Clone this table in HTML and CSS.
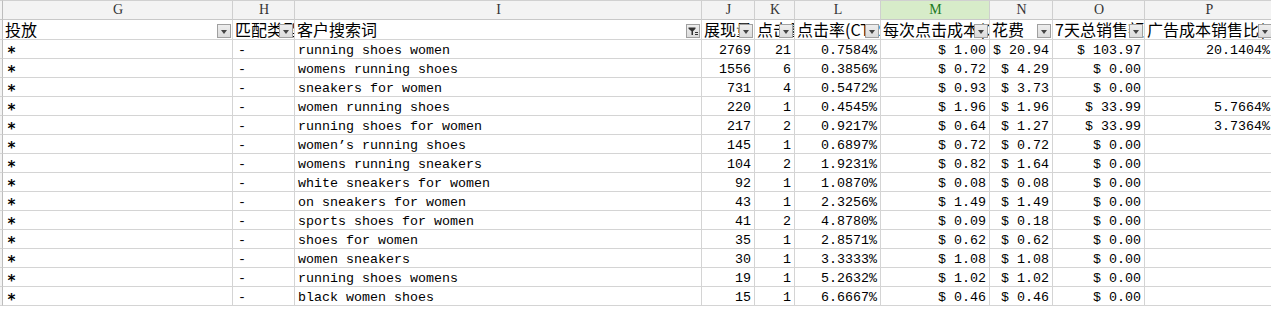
FILE: index.html
```html
<!DOCTYPE html>
<html>
<head>
<meta charset="utf-8">
<link rel="stylesheet" href="styles.css">
</head>
<body>
<div class="sheet">
  <div class="row colhead">
    <div class="c stub"></div>
    <div class="c">G</div><div class="c">H</div><div class="c">I</div><div class="c">J</div><div class="c">K</div><div class="c">L</div><div class="c sel">M</div><div class="c">N</div><div class="c">O</div><div class="c">P</div>
  </div>
  <div class="row fhead">
    <div class="c stub"></div>
    <div class="c"><span class="t">投放</span><span class="dd"></span></div>
    <div class="c"><span class="t">匹配类型</span><span class="dd"></span></div>
    <div class="c"><span class="t">客户搜索词</span><span class="dd act"><svg width="12" height="12" viewBox="0 0 12 12"><path d="M1.5 2.5h7v1.2L6 6.2V10H4.5V6.2L1.5 3.7z" fill="#333"/><path d="M8 7.5h3M8 9.5h3" stroke="#333" stroke-width="1"/></svg></span></div>
    <div class="c"><span class="t">展现量</span><span class="dd"></span></div>
    <div class="c"><span class="t">点击量</span><span class="dd"></span></div>
    <div class="c"><span class="t">点击率(CTR)</span><span class="dd"></span></div>
    <div class="c"><span class="t">每次点击成本(CPC)</span><span class="dd"></span></div>
    <div class="c"><span class="t">花费</span><span class="dd"></span></div>
    <div class="c"><span class="t">7天总销售额</span><span class="dd"></span></div>
    <div class="c"><span class="t">广告成本销售比(ACoS)</span><span class="dd"></span></div>
  </div>
  <div class="row"><div class="c stub"></div><div class="c s">*</div><div class="c d">-</div><div class="c">running shoes women</div><div class="c r">2769</div><div class="c r">21</div><div class="c r">0.7584%</div><div class="c r">$ 1.00</div><div class="c r">$ 20.94</div><div class="c r">$ 103.97</div><div class="c r">20.1404%</div></div>
  <div class="row"><div class="c stub"></div><div class="c s">*</div><div class="c d">-</div><div class="c">womens running shoes</div><div class="c r">1556</div><div class="c r">6</div><div class="c r">0.3856%</div><div class="c r">$ 0.72</div><div class="c r">$ 4.29</div><div class="c r">$ 0.00</div><div class="c r"></div></div>
  <div class="row"><div class="c stub"></div><div class="c s">*</div><div class="c d">-</div><div class="c">sneakers for women</div><div class="c r">731</div><div class="c r">4</div><div class="c r">0.5472%</div><div class="c r">$ 0.93</div><div class="c r">$ 3.73</div><div class="c r">$ 0.00</div><div class="c r"></div></div>
  <div class="row"><div class="c stub"></div><div class="c s">*</div><div class="c d">-</div><div class="c">women running shoes</div><div class="c r">220</div><div class="c r">1</div><div class="c r">0.4545%</div><div class="c r">$ 1.96</div><div class="c r">$ 1.96</div><div class="c r">$ 33.99</div><div class="c r">5.7664%</div></div>
  <div class="row"><div class="c stub"></div><div class="c s">*</div><div class="c d">-</div><div class="c">running shoes for women</div><div class="c r">217</div><div class="c r">2</div><div class="c r">0.9217%</div><div class="c r">$ 0.64</div><div class="c r">$ 1.27</div><div class="c r">$ 33.99</div><div class="c r">3.7364%</div></div>
  <div class="row"><div class="c stub"></div><div class="c s">*</div><div class="c d">-</div><div class="c">women’s running shoes</div><div class="c r">145</div><div class="c r">1</div><div class="c r">0.6897%</div><div class="c r">$ 0.72</div><div class="c r">$ 0.72</div><div class="c r">$ 0.00</div><div class="c r"></div></div>
  <div class="row"><div class="c stub"></div><div class="c s">*</div><div class="c d">-</div><div class="c">womens running sneakers</div><div class="c r">104</div><div class="c r">2</div><div class="c r">1.9231%</div><div class="c r">$ 0.82</div><div class="c r">$ 1.64</div><div class="c r">$ 0.00</div><div class="c r"></div></div>
  <div class="row"><div class="c stub"></div><div class="c s">*</div><div class="c d">-</div><div class="c">white sneakers for women</div><div class="c r">92</div><div class="c r">1</div><div class="c r">1.0870%</div><div class="c r">$ 0.08</div><div class="c r">$ 0.08</div><div class="c r">$ 0.00</div><div class="c r"></div></div>
  <div class="row"><div class="c stub"></div><div class="c s">*</div><div class="c d">-</div><div class="c">on sneakers for women</div><div class="c r">43</div><div class="c r">1</div><div class="c r">2.3256%</div><div class="c r">$ 1.49</div><div class="c r">$ 1.49</div><div class="c r">$ 0.00</div><div class="c r"></div></div>
  <div class="row"><div class="c stub"></div><div class="c s">*</div><div class="c d">-</div><div class="c">sports shoes for women</div><div class="c r">41</div><div class="c r">2</div><div class="c r">4.8780%</div><div class="c r">$ 0.09</div><div class="c r">$ 0.18</div><div class="c r">$ 0.00</div><div class="c r"></div></div>
  <div class="row"><div class="c stub"></div><div class="c s">*</div><div class="c d">-</div><div class="c">shoes for women</div><div class="c r">35</div><div class="c r">1</div><div class="c r">2.8571%</div><div class="c r">$ 0.62</div><div class="c r">$ 0.62</div><div class="c r">$ 0.00</div><div class="c r"></div></div>
  <div class="row"><div class="c stub"></div><div class="c s">*</div><div class="c d">-</div><div class="c">women sneakers</div><div class="c r">30</div><div class="c r">1</div><div class="c r">3.3333%</div><div class="c r">$ 1.08</div><div class="c r">$ 1.08</div><div class="c r">$ 0.00</div><div class="c r"></div></div>
  <div class="row"><div class="c stub"></div><div class="c s">*</div><div class="c d">-</div><div class="c">running shoes womens</div><div class="c r">19</div><div class="c r">1</div><div class="c r">5.2632%</div><div class="c r">$ 1.02</div><div class="c r">$ 1.02</div><div class="c r">$ 0.00</div><div class="c r"></div></div>
  <div class="row"><div class="c stub"></div><div class="c s">*</div><div class="c d">-</div><div class="c">black women shoes</div><div class="c r">15</div><div class="c r">1</div><div class="c r">6.6667%</div><div class="c r">$ 0.46</div><div class="c r">$ 0.46</div><div class="c r">$ 0.00</div><div class="c r"></div></div>
</div>
</body>
</html>
```
FILE: styles.css
```css
html, body {
  margin: 0;
  padding: 0;
  background: #fff;
}
.sheet {
  width: 1271px;
  overflow: hidden;
  font-family: "Liberation Mono", "Noto Sans CJK SC", monospace;
  font-size: 13.33px;
  color: #000;
}
.row {
  display: grid;
  grid-template-columns: 3px 230px 62px 407px 53px 40px 86px 109px 63px 92px 129px;
  height: 19px;
}
.c {
  box-sizing: border-box;
  border-right: 1px solid #d4d4d4;
  border-bottom: 1px solid #d4d4d4;
  padding: 3px 2px 0 3px;
  line-height: 15px;
  white-space: nowrap;
  overflow: hidden;
  position: relative;
}
.c.r {
  text-align: right;
  padding-right: 3px;
}
.c.s {
  font-family: "DejaVu Sans Mono", monospace;
  font-size: 15px;
  font-weight: bold;
  line-height: 15px;
  padding-top: 6px;
  padding-left: 4px;
}
.c.d {
  padding-left: 5px;
}
.stub {
  padding: 0;
  background: #f3f3f3;
  border-right: 1px solid #bdbdbd;
}
.colhead {
  height: 20px;
}
.colhead .c {
  background: #f3f3f3;
  text-align: center;
  color: #333;
  font-family: "Liberation Serif", "DejaVu Serif", serif;
  font-size: 14px;
  padding-top: 0;
  line-height: 18px;
  border-top: 1px solid #d0d0d0;
  border-right-color: #cfcfcf;
  border-bottom-color: #c8c8c8;
}
.colhead .c.sel {
  background: #d7ecc9;
  color: #1f7a1f;
}
.colhead .stub {
  border-right-color: #bdbdbd;
}
.fhead {
  height: 20px;
}
.fhead .c {
  font-family: "Noto Sans CJK SC", sans-serif;
  font-size: 16px;
  line-height: 19px;
  padding: 0 0 0 2px;
}
.fhead .t {
  display: block;
  overflow: hidden;
}
.dd {
  position: absolute;
  right: 1px;
  bottom: 1px;
  width: 14px;
  height: 14px;
  box-sizing: border-box;
  border: 1px solid #a0a0a0;
  background: linear-gradient(#eeeeee, #dcdcdc);
  display: flex;
  align-items: center;
  justify-content: center;
}
.dd::after {
  content: "";
  width: 0;
  height: 0;
  border-left: 3.5px solid transparent;
  border-right: 3.5px solid transparent;
  border-top: 4px solid #444;
  margin-top: 1px;
}
.dd.act::after {
  display: none;
}
```
